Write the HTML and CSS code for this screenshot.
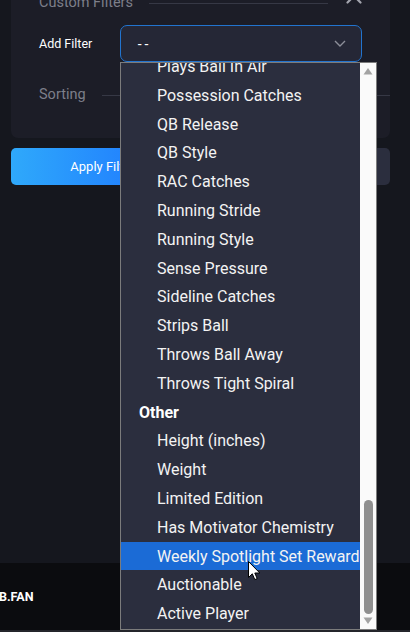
FILE: index.html
```html
<!DOCTYPE html>
<html>
<head>
<meta charset="utf-8">
<link rel="stylesheet" href="styles.css">
</head>
<body>
<div class="page">
  <div class="main">
    <section class="card">
      <div class="card-head">
        <span class="section-title">Custom Filters</span>
        <span class="rule"></span>
        <svg class="close" width="16" height="16" viewBox="0 0 16 16"><path d="M1.5 1.5L14.5 14.5M14.5 1.5L1.5 14.5" stroke="#a3a5ae" stroke-width="2.2" stroke-linecap="round"/></svg>
      </div>
      <div class="filter-row">
        <span class="filter-label">Add Filter</span>
        <div class="select">
          <span class="select-value">--</span>
          <svg class="chevron" width="12" height="7" viewBox="0 0 12 7"><path d="M1 1L6 6L11 1" fill="none" stroke="#8c8e99" stroke-width="1.4"/></svg>
        </div>
      </div>
      <div class="sort-row">
        <span class="section-title">Sorting</span>
        <span class="rule"></span>
      </div>
    </section>
    <div class="actions">
      <button class="btn apply">Apply Filters</button>
      <button class="btn reset">Reset Filters</button>
    </div>
  </div>
  <footer class="footer"><span class="brand">B.FAN</span></footer>

  <div class="dropdown">
    <div class="options">
      <div class="options-inner">
        <div class="opt">Plays Ball In Air</div>
        <div class="opt">Possession Catches</div>
        <div class="opt">QB Release</div>
        <div class="opt">QB Style</div>
        <div class="opt">RAC Catches</div>
        <div class="opt">Running Stride</div>
        <div class="opt">Running Style</div>
        <div class="opt">Sense Pressure</div>
        <div class="opt">Sideline Catches</div>
        <div class="opt">Strips Ball</div>
        <div class="opt">Throws Ball Away</div>
        <div class="opt">Throws Tight Spiral</div>
        <div class="group">Other</div>
        <div class="opt">Height (inches)</div>
        <div class="opt">Weight</div>
        <div class="opt">Limited Edition</div>
        <div class="opt">Has Motivator Chemistry</div>
        <div class="opt active">Weekly Spotlight Set Reward</div>
        <div class="opt">Auctionable</div>
        <div class="opt">Active Player</div>
      </div>
    </div>
    <div class="scrollbar">
      <svg class="arrow" width="10" height="8" viewBox="0 0 10 8"><path d="M5 1L9.5 7.5H0.5Z" fill="#a3a3a3"/></svg>
      <div class="track"><div class="thumb"></div></div>
      <svg class="arrow" width="10" height="8" viewBox="0 0 10 8"><path d="M5 7L9.5 0.5H0.5Z" fill="#a3a3a3"/></svg>
    </div>
  </div>

  <svg class="cursor" width="13" height="20" viewBox="0 0 13 20"><path d="M0.5 0.5V16.5L4.3 12.8L6.8 18.6L9.2 17.6L6.8 12H11.8Z" fill="#fff" stroke="#000" stroke-width="1"/></svg>
</div>
</body>
</html>
```

FILE: styles.css
```css
* { box-sizing: border-box; }
html, body {
  margin: 0;
  padding: 0;
  background: #15171e;
}
body {
  width: 410px;
  height: 632px;
  overflow: hidden;
  font-family: Roboto, Inter, "Noto Sans", sans-serif;
}
.page {
  position: relative;
  width: 410px;
  height: 632px;
  display: flex;
  flex-direction: column;
}
.main {
  height: 563px;
  padding: 0 20px 0 11px;
  background: #15171e;
}
.card {
  margin-top: -20px;
  background: #1c1d27;
  border-radius: 7px;
  padding: 12px 28px 32px 28px;
  display: flex;
  flex-direction: column;
}
.card-head {
  height: 22px;
  display: flex;
  align-items: center;
}
.section-title {
  color: #7d7f8a;
  font-size: 14.5px;
  line-height: 22px;
}
.rule {
  flex: 1;
  height: 1px;
  background: #363845;
}
.card-head .rule { margin: 0 18px 0 16px; }
.close {
  display: block;
  flex: none;
  align-self: flex-start;
  margin-top: -4px;
}
.filter-row {
  margin-top: 11px;
  height: 37px;
  display: flex;
  align-items: center;
}
.filter-label {
  width: 81px;
  color: #ffffff;
  font-size: 12.5px;
}
.select {
  width: 243px;
  height: 37px;
  border: 1px solid #2274cf;
  border-radius: 7px;
  background: #252736;
  display: flex;
  align-items: center;
  justify-content: space-between;
  padding: 0 15px 0 17px;
}
.select-value {
  color: #ffffff;
  font-size: 14px;
  letter-spacing: 3px;
}
.sort-row {
  margin-top: 22px;
  height: 22px;
  display: flex;
  align-items: center;
}
.sort-row .rule { margin-left: 16px; margin-right: -28px; }
.actions {
  margin-top: 10px;
  display: flex;
  gap: 8px;
}
.btn {
  height: 37px;
  border: none;
  border-radius: 5px;
  font-family: inherit;
  font-size: 13px;
  color: #fff;
}
.apply {
  width: 190px;
  background: linear-gradient(90deg, #2fa9fb, #1a6cff);
}
.reset {
  flex: 1;
  background: #2b2e3e;
}
.footer {
  height: 69px;
  background: #0b0c0f;
  display: flex;
  align-items: center;
  border-bottom: 2px solid #24252b;
}
.brand {
  color: #fff;
  font-weight: 700;
  font-size: 12.5px;
  margin-left: -1px;
}
.dropdown {
  position: absolute;
  left: 120px;
  top: 62px;
  width: 257px;
  height: 568px;
  border: 1px solid #7c7c7c;
  background: #2b2e3e;
  display: flex;
}
.options {
  flex: 1;
  overflow: hidden;
}
.options-inner {
  margin-top: -11px;
}
.opt, .group {
  height: 28.8px;
  line-height: 26.8px;
  padding-top: 2px;
  white-space: nowrap;
  font-size: 16px;
}
.opt {
  padding-left: 36px;
  color: #f3f3f3;
}
.opt.active {
  background: #1b6bd6;
}
.group {
  padding-left: 18px;
  color: #ffffff;
  font-weight: 700;
}
.scrollbar {
  width: 16px;
  background: #fafafa;
  display: flex;
  flex-direction: column;
  align-items: center;
  padding: 4px 0 4px;
}
.arrow { display: block; flex: none; }
.track {
  flex: 1;
  width: 100%;
  display: flex;
  flex-direction: column;
  justify-content: flex-end;
  align-items: center;
  padding: 2px 0 3px;
}
.thumb {
  width: 9px;
  height: 114px;
  border-radius: 5px;
  background: #8f8f8f;
}
.cursor {
  position: absolute;
  left: 248px;
  top: 561px;
}
```
